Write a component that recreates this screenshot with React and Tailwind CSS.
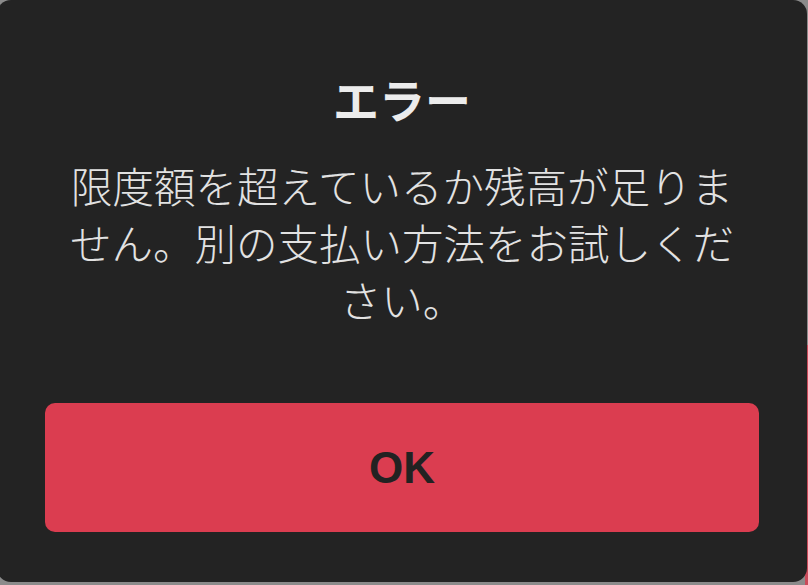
export default function App() {
  return (
    <div className="relative h-[585px] w-[808px] overflow-hidden bg-[#8b8b8b]">
      <div className="absolute right-0 top-[345px] h-[240px] w-[3px] bg-[#c94a5a]" />
      <div
        className="relative ml-[-3px] flex h-[582px] w-[810px] flex-col rounded-[14px] bg-[#232323] px-[48px] pt-[71px]"
        style={{ fontFamily: '"Noto Sans CJK JP", "Noto Sans", sans-serif' }}
      >
        <h1 className="text-center text-[46px] font-bold leading-[55px] text-[#ececec]">
          エラー
        </h1>
        <p className="mx-auto mt-[31px] w-[690px] text-center text-[41.5px] font-light leading-[57px] text-[#e2e2e2]">
          限度額を超えているか残高が足りません。別の支払い方法をお試しください。
        </p>
        <button
          className="mt-[75px] h-[129px] w-full rounded-[10px] bg-[#db3d50] text-[44px] font-bold text-[#222222]"
          style={{ fontFamily: '"Liberation Sans", Arial, sans-serif' }}
          type="button"
        >
          OK
        </button>
      </div>
    </div>
  )
}
